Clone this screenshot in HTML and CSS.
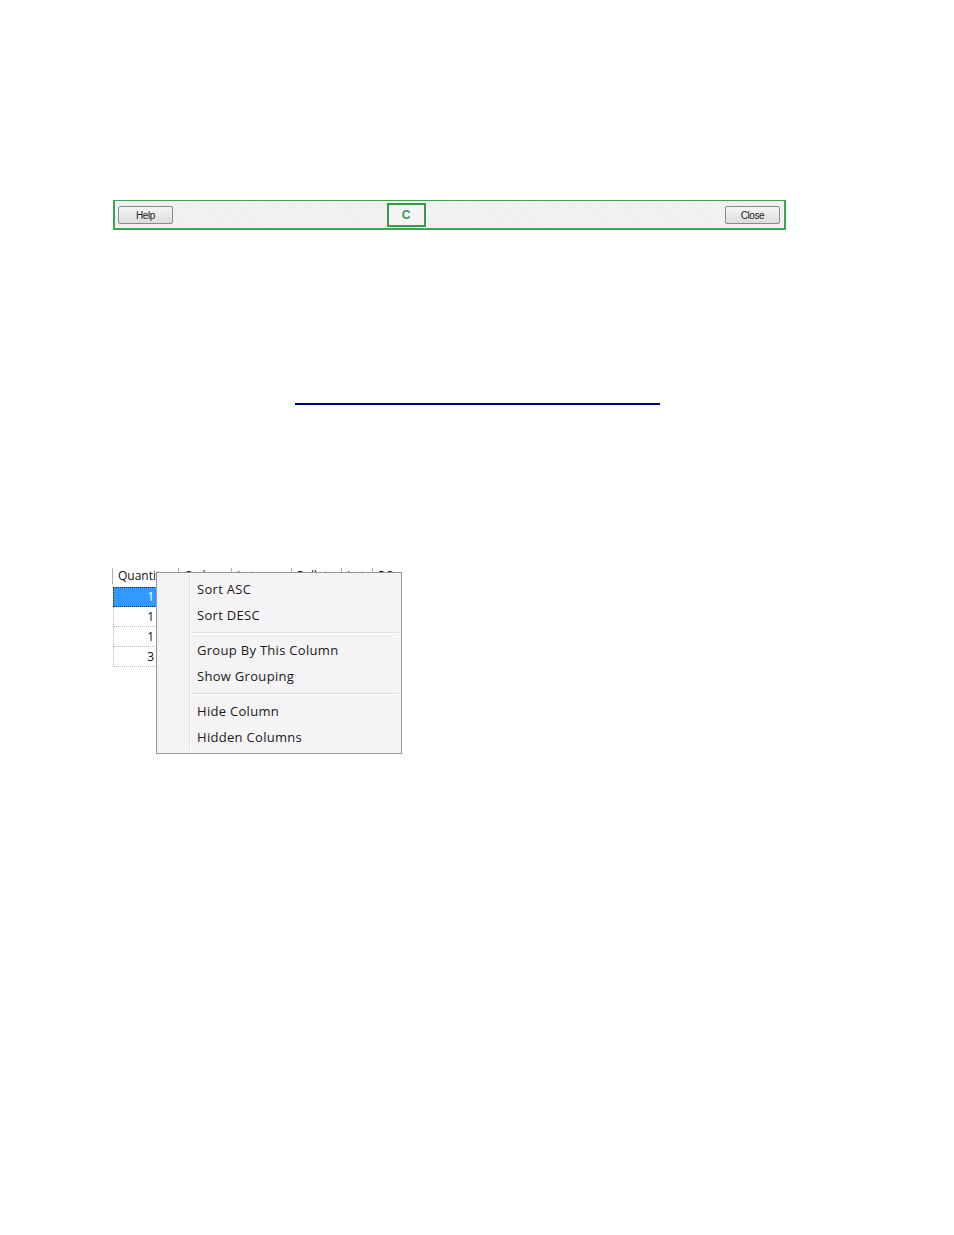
FILE: index.html
```html
<!DOCTYPE html>
<html>
<head>
<meta charset="utf-8">
<link rel="stylesheet" href="styles.css">
</head>
<body>
<div class="page">
  <div class="toolbar">
    <button class="btn">Help</button>
    <div class="callout">C</div>
    <button class="btn">Close</button>
  </div>

  <div class="rule"></div>

  <div class="gridwrap">
    <div class="grid">
      <div class="hrow">
        <div class="hcell c1">Quantity</div>
        <div class="hcell c2">Orders</div>
        <div class="hcell c3">Lot num</div>
        <div class="hcell c4">Pallet</div>
        <div class="hcell c5">Lot</div>
        <div class="hcell c6">PO</div>
      </div>
      <div class="row sel"><div class="cell">1</div></div>
      <div class="row"><div class="cell">1</div></div>
      <div class="row"><div class="cell">1</div></div>
      <div class="row"><div class="cell">3</div></div>
    </div>

    <div class="menu">
      <div class="gutter"></div>
      <div class="item">Sort ASC</div>
      <div class="item">Sort DESC</div>
      <div class="sep"></div>
      <div class="item">Group By This Column</div>
      <div class="item">Show Grouping</div>
      <div class="sep"></div>
      <div class="item">Hide Column</div>
      <div class="item">Hidden Columns</div>
    </div>
  </div>
</div>
</body>
</html>
```

FILE: styles.css
```css
html, body {
  margin: 0;
  padding: 0;
  background: #ffffff;
}
.page {
  width: 954px;
  height: 1235px;
  padding-top: 200px;
  box-sizing: border-box;
  font-family: "Liberation Sans", Arial, sans-serif;
}
.toolbar {
  margin-left: 113px;
  width: 673px;
  height: 30px;
  box-sizing: border-box;
  border: 2px solid #36a852;
  border-top-width: 1px;
  background: #efefef;
  background-image: repeating-linear-gradient(45deg, rgba(255,255,255,0.35) 0 1px, transparent 1px 3px);
  display: flex;
  align-items: center;
  justify-content: space-between;
  padding: 0 4px 0 3px;
}
.btn {
  width: 55px;
  height: 18px;
  margin-top: 1px;
  box-sizing: border-box;
  border: 1px solid #8a8a8a;
  border-radius: 2px;
  background: linear-gradient(#f6f6f6, #dcdcdc);
  font-family: "Liberation Sans", Arial, sans-serif;
  font-size: 10px;
  color: #222;
  padding: 0;
  letter-spacing: -0.4px;
}
.callout {
  width: 39px;
  height: 24px;
  box-sizing: border-box;
  border: 2px solid #2e9e48;
  background: #f4f4f4;
  color: #2e9e48;
  font-weight: bold;
  font-size: 12px;
  display: flex;
  align-items: center;
  justify-content: center;
  margin-left: -86px;
  margin-top: 1px;
}
.rule {
  margin: 173px 0 0 295px;
  width: 365px;
  height: 2px;
  background: #000080;
}
.gridwrap {
  position: relative;
  margin: 161px 0 0 112px;
  width: 300px;
  height: 200px;
}
.grid {
  width: 290px;
  font-family: "Open Sans", "Liberation Sans", sans-serif;
  font-size: 12px;
  color: #111;
}
.hrow {
  display: flex;
  height: 20px;
  align-items: center;
  overflow: hidden;
}
.hcell {
  height: 16px;
  line-height: 16px;
  border-left: 1px solid #b0b0b0;
  padding-left: 5px;
  overflow: hidden;
  white-space: nowrap;
  box-sizing: border-box;
}
.c1 { width: 66px; }
.c2 { width: 53px; }
.c3 { width: 60px; }
.c4 { width: 50px; }
.c5 { width: 31px; }
.c6 { width: 30px; }
.row {
  width: 44px;
  height: 20px;
  box-sizing: border-box;
  border: 1px dotted #b8b8c8;
  border-top: none;
  display: flex;
  align-items: center;
  justify-content: flex-end;
  padding-right: 2px;
  margin-left: 1px;
}
.row.sel {
  background: #3399ff;
  color: #fff;
  border: 1px dotted #1e2a4a;
  margin-top: 1px;
}
.cell {
  line-height: 18px;
}
.menu {
  position: absolute;
  left: 44px;
  top: 6px;
  width: 246px;
  box-sizing: border-box;
  border: 1px solid #979797;
  background: #f5f3f5;
  padding: 4px 3px 2px 0;
  font-family: "Open Sans", "Noto Sans", sans-serif;
  font-size: 13px;
  color: #1a1a1a;
}
.gutter {
  position: absolute;
  left: 32px;
  top: 2px;
  bottom: 2px;
  width: 1px;
  background: #e2dee2;
  border-right: 1px solid #ffffff;
}
.item {
  height: 26px;
  line-height: 25px;
  padding-left: 40px;
  letter-spacing: 0.3px;
}
.sep {
  margin: 3px 0 4px 34px;
  height: 1px;
  background: #e0dce0;
  border-bottom: 1px solid #ffffff;
}
```
